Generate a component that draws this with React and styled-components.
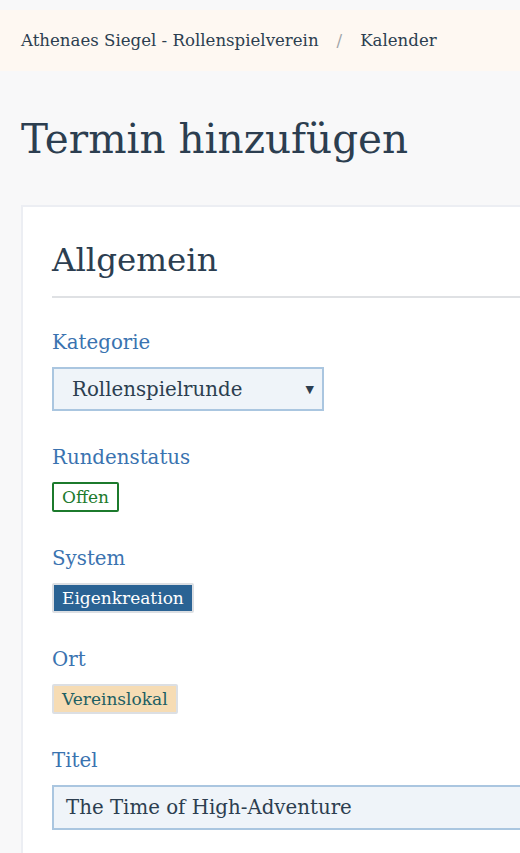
import React from "react";
import styled, { createGlobalStyle } from "styled-components";

const GlobalStyle = createGlobalStyle`
  html, body {
    margin: 0;
    padding: 0;
    background: #f8f8f9;
    font-family: "DejaVu Serif", "Liberation Serif", serif;
    color: #2c3e50;
    overflow: hidden;
  }
`;

const Page = styled.div`
  padding-top: 10px;
  width: 520px;
  overflow: hidden;
`;

const Breadcrumb = styled.nav`
  display: flex;
  align-items: center;
  height: 61px;
  padding: 0 21px;
  background: #fef8f2;
  font-size: 16.6px;
  color: #2c3e50;
  white-space: nowrap;
`;

const Separator = styled.span`
  color: #a0a4a8;
  margin: 0 18px;
`;

const Main = styled.main`
  padding-left: 21px;
`;

const Title = styled.h1`
  margin: 42px 0 40px;
  font-size: 40.5px;
  font-weight: normal;
  line-height: 52px;
  color: #2c3e50;
  white-space: nowrap;
`;

const Card = styled.section`
  background: #fff;
  border: 2px solid #eceef3;
  border-right: none;
  padding: 31px 0 40px 29px;
  margin-right: -40px;
`;

const SectionTitle = styled.h2`
  margin: 0;
  padding-bottom: 14px;
  font-size: 32.5px;
  font-weight: normal;
  line-height: 44px;
  color: #2c3e50;
  border-bottom: 2px solid #dfe1e4;
`;

const Field = styled.div`
  display: flex;
  flex-direction: column;
  align-items: flex-start;
  margin-top: ${(p) => (p.$first ? "31px" : "33px")};
`;

const Label = styled.div`
  font-size: 19.8px;
  line-height: 28px;
  color: #3a73b0;
  margin-bottom: 10px;
`;

const SelectBox = styled.div`
  display: flex;
  align-items: center;
  justify-content: space-between;
  padding: 0 8px 0 18px;
  box-sizing: border-box;
  width: 272px;
  height: 44px;
  background: #eff4f9;
  border: 2px solid #aac6e0;
  font-size: 19.8px;
  color: #2c3e50;
`;

const Arrow = styled.span`
  font-size: 11px;
  color: #2c3e50;
`;

const Badge = styled.span`
  display: inline-flex;
  align-items: center;
  padding: 0 8px;
  height: 30px;
  box-sizing: border-box;
  font-size: 17px;
  border-radius: 2px;
  border: 2px solid ${(p) => p.$border};
  background: ${(p) => p.$bg};
  color: ${(p) => p.$color};
  white-space: nowrap;
`;

const TextInput = styled.div`
  align-self: stretch;
  height: 45px;
  box-sizing: border-box;
  display: flex;
  align-items: center;
  padding-left: 12px;
  background: #eff4f9;
  border: 2px solid #aac6e0;
  border-right: none;
  font-size: 19.8px;
  color: #2c3e50;
  white-space: nowrap;
`;

export default function App() {
  return (
    <>
      <GlobalStyle />
      <Page>
        <Breadcrumb>
          <span>Athenaes Siegel - Rollenspielverein</span>
          <Separator>/</Separator>
          <span>Kalender</span>
        </Breadcrumb>
        <Main>
          <Title>Termin hinzufügen</Title>
          <Card>
            <SectionTitle>Allgemein</SectionTitle>
            <Field $first>
              <Label>Kategorie</Label>
              <SelectBox>
                <span>Rollenspielrunde</span>
                <Arrow>▼</Arrow>
              </SelectBox>
            </Field>
            <Field>
              <Label>Rundenstatus</Label>
              <Badge $border="#1c7a2c" $bg="#fff" $color="#1c7a2c">Offen</Badge>
            </Field>
            <Field>
              <Label>System</Label>
              <Badge $border="#dcdfe3" $bg="#2a6394" $color="#fff">Eigenkreation</Badge>
            </Field>
            <Field>
              <Label>Ort</Label>
              <Badge $border="#dcdfe3" $bg="#f6dcb4" $color="#1d5f63">Vereinslokal</Badge>
            </Field>
            <Field>
              <Label>Titel</Label>
              <TextInput>The Time of High-Adventure</TextInput>
            </Field>
          </Card>
        </Main>
      </Page>
    </>
  );
}
